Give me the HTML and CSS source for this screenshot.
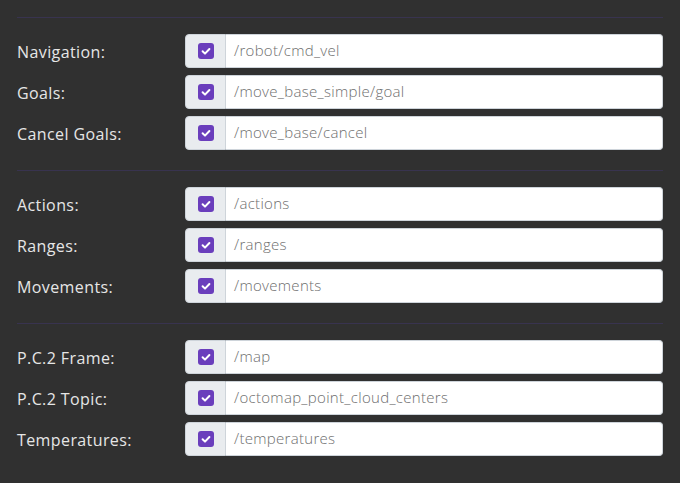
FILE: index.html
```html
<!DOCTYPE html>
<html>
<head>
<meta charset="utf-8">
<link rel="stylesheet" href="styles.css">
</head>
<body>
<div class="panel">
  <hr class="divider">
  <div class="group">
    <div class="row"><label class="label">Navigation:</label><div class="field"><span class="prepend"><span class="check"><svg viewBox="0 0 16 16" width="16" height="16"><path d="M4.6 8.3 L7 10.6 L11.4 6" fill="none" stroke="#fff" stroke-width="2" stroke-linecap="round" stroke-linejoin="round"/></svg></span></span><span class="value">/robot/cmd_vel</span></div></div>
    <div class="row"><label class="label">Goals:</label><div class="field"><span class="prepend"><span class="check"><svg viewBox="0 0 16 16" width="16" height="16"><path d="M4.6 8.3 L7 10.6 L11.4 6" fill="none" stroke="#fff" stroke-width="2" stroke-linecap="round" stroke-linejoin="round"/></svg></span></span><span class="value">/move_base_simple/goal</span></div></div>
    <div class="row"><label class="label">Cancel Goals:</label><div class="field"><span class="prepend"><span class="check"><svg viewBox="0 0 16 16" width="16" height="16"><path d="M4.6 8.3 L7 10.6 L11.4 6" fill="none" stroke="#fff" stroke-width="2" stroke-linecap="round" stroke-linejoin="round"/></svg></span></span><span class="value">/move_base/cancel</span></div></div>
  </div>
  <hr class="divider">
  <div class="group">
    <div class="row"><label class="label">Actions:</label><div class="field"><span class="prepend"><span class="check"><svg viewBox="0 0 16 16" width="16" height="16"><path d="M4.6 8.3 L7 10.6 L11.4 6" fill="none" stroke="#fff" stroke-width="2" stroke-linecap="round" stroke-linejoin="round"/></svg></span></span><span class="value">/actions</span></div></div>
    <div class="row"><label class="label">Ranges:</label><div class="field"><span class="prepend"><span class="check"><svg viewBox="0 0 16 16" width="16" height="16"><path d="M4.6 8.3 L7 10.6 L11.4 6" fill="none" stroke="#fff" stroke-width="2" stroke-linecap="round" stroke-linejoin="round"/></svg></span></span><span class="value">/ranges</span></div></div>
    <div class="row"><label class="label">Movements:</label><div class="field"><span class="prepend"><span class="check"><svg viewBox="0 0 16 16" width="16" height="16"><path d="M4.6 8.3 L7 10.6 L11.4 6" fill="none" stroke="#fff" stroke-width="2" stroke-linecap="round" stroke-linejoin="round"/></svg></span></span><span class="value">/movements</span></div></div>
  </div>
  <hr class="divider">
  <div class="group">
    <div class="row"><label class="label">P.C.2 Frame:</label><div class="field"><span class="prepend"><span class="check"><svg viewBox="0 0 16 16" width="16" height="16"><path d="M4.6 8.3 L7 10.6 L11.4 6" fill="none" stroke="#fff" stroke-width="2" stroke-linecap="round" stroke-linejoin="round"/></svg></span></span><span class="value">/map</span></div></div>
    <div class="row"><label class="label">P.C.2 Topic:</label><div class="field"><span class="prepend"><span class="check"><svg viewBox="0 0 16 16" width="16" height="16"><path d="M4.6 8.3 L7 10.6 L11.4 6" fill="none" stroke="#fff" stroke-width="2" stroke-linecap="round" stroke-linejoin="round"/></svg></span></span><span class="value">/octomap_point_cloud_centers</span></div></div>
    <div class="row"><label class="label">Temperatures:</label><div class="field"><span class="prepend"><span class="check"><svg viewBox="0 0 16 16" width="16" height="16"><path d="M4.6 8.3 L7 10.6 L11.4 6" fill="none" stroke="#fff" stroke-width="2" stroke-linecap="round" stroke-linejoin="round"/></svg></span></span><span class="value">/temperatures</span></div></div>
  </div>
</div>
</body>
</html>
```
FILE: styles.css
```css
html, body {
  margin: 0;
  padding: 0;
  background: #303030;
  height: 100%;
}
.panel {
  padding: 17px 17px 0 17px;
  font-family: "Open Sans", "Liberation Sans", sans-serif;
}
.divider {
  margin: 0;
  border: 0;
  border-top: 1px solid #38334f;
  height: 0;
}
.group {
  display: flex;
  flex-direction: column;
  gap: 7px;
  padding: 16px 0 20px 0;
}
.row {
  display: grid;
  grid-template-columns: 168px 1fr;
  align-items: center;
  height: 34px;
}
.label {
  color: #e6e6e6;
  font-size: 16px;
  letter-spacing: 0.4px;
  padding-top: 2px;
}
.field {
  display: flex;
  height: 34px;
}
.prepend {
  width: 39px;
  border: 1px solid #ced4da;
  border-radius: 4px 0 0 4px;
  background: #e9ecef;
  display: flex;
  align-items: center;
  justify-content: center;
}
.check {
  width: 16px;
  height: 16px;
  border-radius: 3px;
  background: #6a3ebc;
  display: block;
}
.check svg { display: block; }
.value {
  flex: 1;
  background: #fff;
  border: 1px solid #ced4da;
  border-left: 0;
  border-radius: 0 4px 4px 0;
  padding: 0 8px 3px 8px;
  display: flex;
  align-items: center;
  color: #6e6e6e;
  font-size: 15px;
  font-weight: 300;
  letter-spacing: 0.3px;
  box-sizing: border-box;
}
```
